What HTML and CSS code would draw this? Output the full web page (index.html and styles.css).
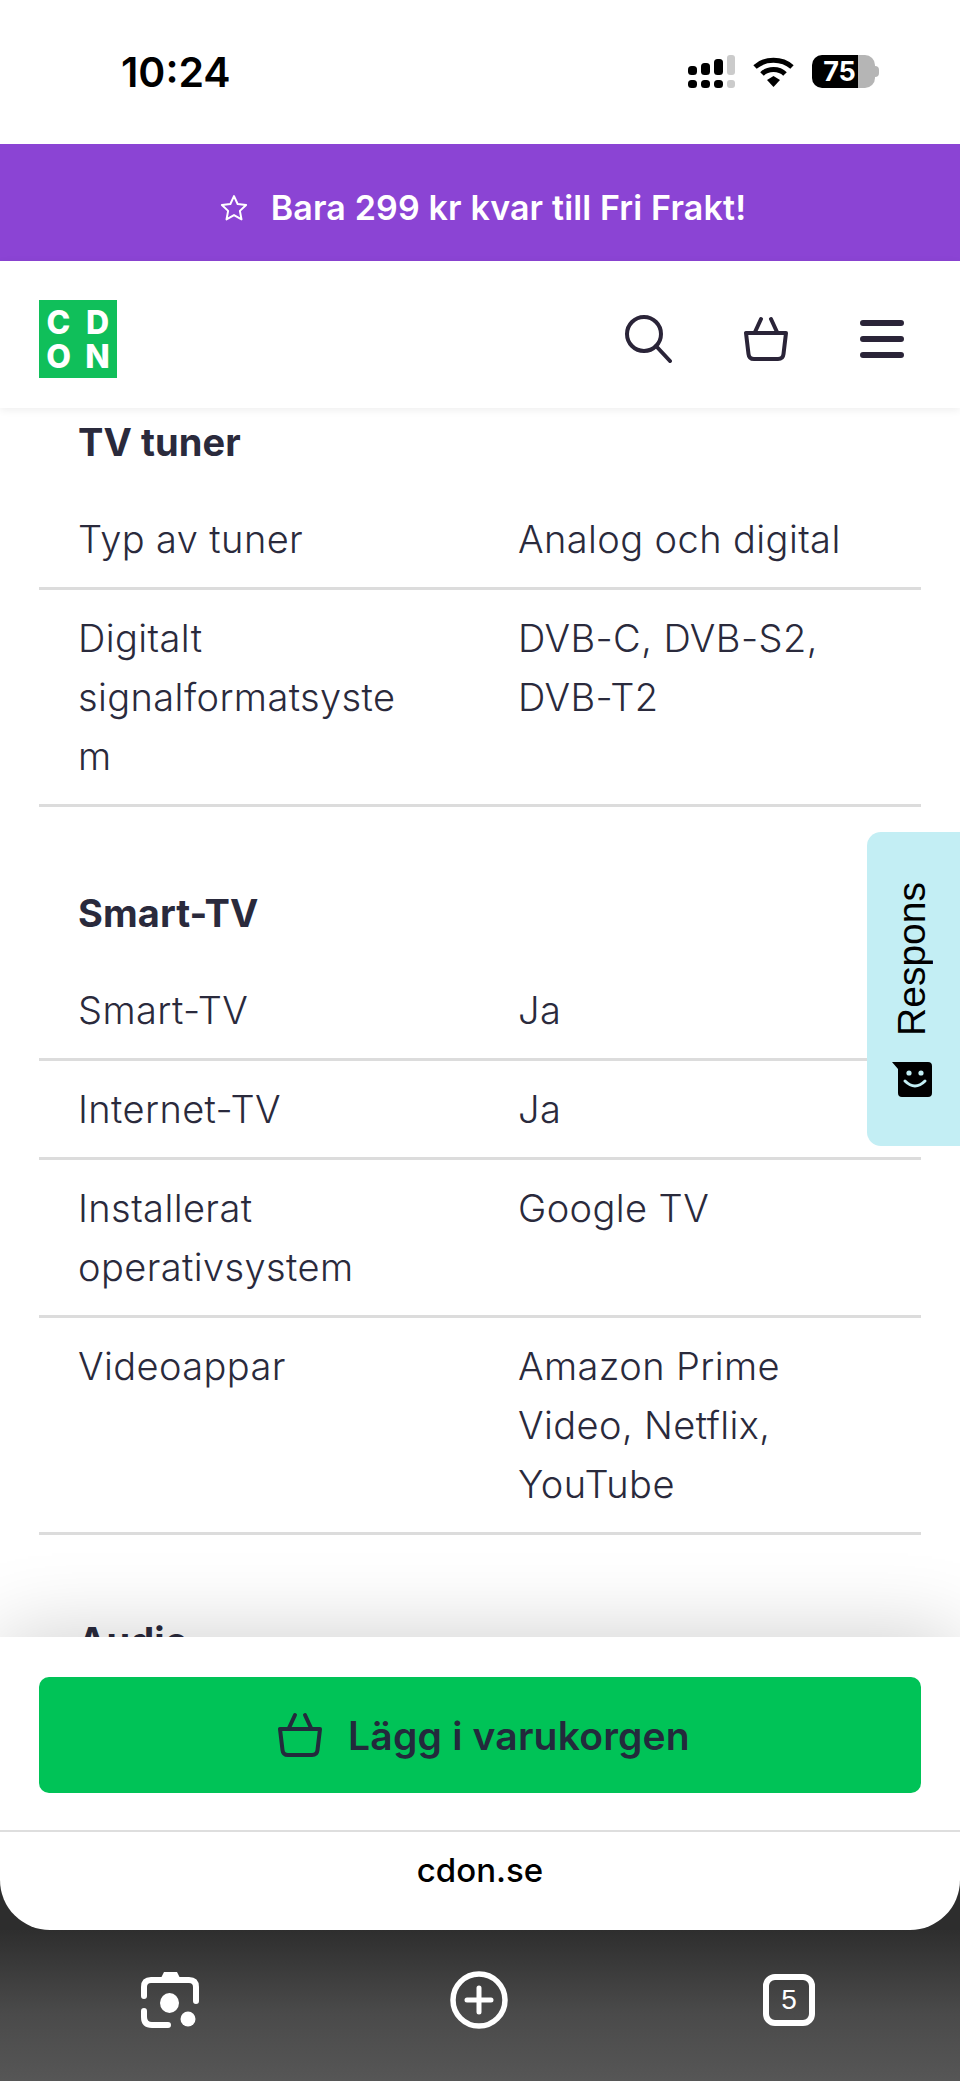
FILE: index.html
```html
<!DOCTYPE html>
<html lang="sv">
<head>
    <meta charset="UTF-8">
    <meta name="viewport" content="width=device-width, initial-scale=1.0">
    <title>CDON</title>
    <link rel="stylesheet" href="styles.css">
</head>
<body>
    <div class="status-bar">
        <span class="clock">10:24</span>
        <div class="status-icons">
            <svg width="47" height="33" viewBox="0 0 47 33">
                <rect x="0" y="11" width="9" height="9" rx="3.5"/>
                <rect x="13" y="8" width="9" height="12" rx="3.5"/>
                <rect x="26" y="4" width="9" height="16" rx="3.5"/>
                <rect x="39" y="0" width="8" height="20" rx="3" fill="#cbcbcb"/>
                <rect x="0" y="25" width="9" height="8" rx="3.5"/>
                <rect x="13" y="25" width="9" height="8" rx="3.5"/>
                <rect x="26" y="25" width="9" height="8" rx="3.5"/>
                <rect x="39" y="25" width="8" height="8" rx="3" fill="#cbcbcb"/>
            </svg>
            <svg class="wifi" width="41" height="31" viewBox="0 0 41 31">
                <path d="M2 11 C12 2 29 2 39 11" fill="none" stroke="#000" stroke-width="5"/>
                <path d="M9 18 C15 12 26 12 32 18" fill="none" stroke="#000" stroke-width="5"/>
                <path d="M14 24 L20.5 20 L27 24 L20.5 31 Z"/>
            </svg>
            <div class="battery">
                <span class="battery-level">75</span>
                <span class="battery-tip"></span>
            </div>
        </div>
    </div>

    <div class="promo">
        <svg width="30" height="30" viewBox="0 0 24 24">
            <path d="M12 2.5l2.9 6.3 6.8.8-5 4.7 1.3 6.8-6-3.4-6 3.4 1.3-6.8-5-4.7 6.8-.8z" fill="none" stroke="#fff" stroke-width="1.6" stroke-linejoin="round"/>
        </svg>
        <span>Bara 299 kr kvar till Fri Frakt!</span>
    </div>

    <header class="site-header">
        <div class="logo">
            <span>C</span><span>D</span><span>O</span><span>N</span>
        </div>
        <div class="header-icons">
            <svg width="48" height="48" viewBox="0 0 48 48" fill="none" stroke="#2a2438" stroke-width="4" stroke-linecap="round">
                <circle cx="20" cy="19" r="17"/>
                <path d="M32 31 L46 46"/>
            </svg>
            <svg width="44" height="46" viewBox="0 0 44 46" fill="none" stroke="#2a2438" stroke-width="4" stroke-linecap="round">
                <path d="M2 17 H42 L39.500 38 Q39 43 34 43 H10 Q5 43 4.500 38 Z" stroke-linejoin="round"/>
                <path d="M11 16 L17 3 M33 16 L27 3"/>
            </svg>
            <svg width="44" height="38" viewBox="0 0 44 38" fill="none" stroke="#2a2438" stroke-width="6" stroke-linecap="round">
                <path d="M3 3 H41 M3 19 H41 M3 35 H41"/>
            </svg>
        </div>
    </header>

    <main class="specs">
        <section class="spec-group">
            <h3>TV tuner</h3>
            <div class="spec-row"><div>Typ av tuner</div><div>Analog och digital</div></div>
            <div class="spec-row"><div>Digitalt signalformatsystem</div><div>DVB-C, DVB-S2, DVB-T2</div></div>
        </section>
        <section class="spec-group">
            <h3>Smart-TV</h3>
            <div class="spec-row"><div>Smart-TV</div><div>Ja</div></div>
            <div class="spec-row"><div>Internet-TV</div><div>Ja</div></div>
            <div class="spec-row"><div>Installerat operativsystem</div><div>Google TV</div></div>
            <div class="spec-row"><div>Videoappar</div><div>Amazon Prime Video, Netflix, YouTube</div></div>
        </section>
        <section class="spec-group">
            <h3>Audio</h3>
        </section>

        <div class="feedback-tab">
            <span>Respons</span>
            <svg width="40" height="35" viewBox="0 0 40 35">
                <path d="M0 0 H36 Q40 0 40 4 V31 Q40 35 36 35 H10 Q6 35 6 31 V7 Z"/>
                <circle cx="17" cy="11" r="2.600" fill="#c3eef4"/>
                <circle cx="29" cy="11" r="2.600" fill="#c3eef4"/>
                <path d="M13 19 Q23 29 33 19" fill="none" stroke="#c3eef4" stroke-width="3" stroke-linecap="round"/>
            </svg>
        </div>
    </main>

    <div class="browser-bottom">
        <div class="sheet">
            <div class="buy-area">
                <button class="buy-button">
                    <svg width="44" height="46" viewBox="0 0 44 46" fill="none" stroke="#232a3c" stroke-width="4" stroke-linecap="round">
                        <path d="M2 17 H42 L39.500 38 Q39 43 34 43 H10 Q5 43 4.500 38 Z" stroke-linejoin="round"/>
                        <path d="M11 16 L17 3 M33 16 L27 3"/>
                    </svg>
                    <span>Lägg i varukorgen</span>
                </button>
            </div>
            <div class="address">cdon.se</div>
        </div>
        <div class="toolbar">
            <svg width="58" height="58" viewBox="0 0 58 58" fill="none" stroke="#fff" stroke-width="6" stroke-linecap="round">
                <path d="M3 25 V16 Q3 9 10 9 H48 Q55 9 55 16 V30"/>
                <path d="M3 40 V46 Q3 54 11 54 H27"/>
                <path d="M19 9 L23 1 H36 L40 9 Z" fill="#fff" stroke="none"/>
                <ellipse cx="28.500" cy="32" rx="9.500" ry="10" fill="#fff" stroke="none"/>
                <circle cx="47" cy="48" r="7.500" fill="#fff" stroke="none"/>
            </svg>
            <svg class="new-tab" width="58" height="58" viewBox="0 0 58 58" fill="none" stroke="#fff" stroke-linecap="round">
                <circle cx="29" cy="29" r="26" stroke-width="5.500"/>
                <path d="M17 29 H41 M29 17 V41" stroke-width="5"/>
            </svg>
            <div class="tab-count">5</div>
        </div>
    </div>
</body>
</html>
```

FILE: styles.css
```css
* {
    box-sizing: border-box;
}
html, body {
    height: 100%;
}
body {
    margin: 0;
    display: flex;
    flex-direction: column;
    height: 2081px;
    overflow: hidden;
    background: #fff;
    color: #2a2a3c;
    font-family: "Inter", "Liberation Sans", sans-serif;
}

/* phone status bar */
.status-bar {
    height: 144px;
    flex: none;
    display: flex;
    justify-content: space-between;
    align-items: flex-start;
    padding: 49px 85px 0 121px;
}
.clock {
    font-size: 41px;
    line-height: 46px;
    font-weight: 600;
    color: #000;
}
.status-icons {
    display: flex;
    align-items: flex-start;
    gap: 18px;
    padding-top: 6px;
}
.wifi {
    margin-top: 1px;
}
.battery {
    position: relative;
    width: 63px;
    height: 33px;
    border-radius: 10px;
    background: linear-gradient(to right, #000 46px, #b5b5b5 46px);
    color: #fff;
    font-size: 27px;
    font-weight: 700;
    line-height: 33px;
    text-align: center;
    padding-right: 8px;
}
.battery-tip {
    position: absolute;
    right: -4px;
    top: 11px;
    width: 4px;
    height: 11px;
    border-radius: 0 4px 4px 0;
    background: #b5b5b5;
}

.promo {
    height: 117px;
    flex: none;
    background: #8b44d4;
    color: #fff;
    display: flex;
    align-items: center;
    justify-content: center;
    gap: 22px;
    padding: 10px 0 0 5px;
    font-size: 34px;
    font-weight: 600;
    letter-spacing: 0.15px;
}

.site-header {
    height: 147px;
    flex: none;
    display: flex;
    justify-content: space-between;
    align-items: center;
    padding: 8px 56px 0 39px;
    background: #fff;
    box-shadow: 0 2px 8px rgba(0, 0, 0, 0.07);
    position: relative;
    z-index: 2;
}
.logo {
    width: 78px;
    height: 78px;
    background: #10bf5a;
    color: #fff;
    display: grid;
    grid-template-columns: 1fr 1fr;
    grid-auto-rows: 34px;
    place-items: center;
    padding: 6px 0 4px;
    font-size: 32px;
    font-weight: 800;
    line-height: 34px;
}
.header-icons {
    display: flex;
    align-items: center;
    gap: 72px;
}

/* product specification table */
.specs {
    flex: 1;
    min-height: 0;
    overflow: hidden;
    position: relative;
    padding: 5px 39px 0;
    font-size: 38px;
    font-weight: 350;
    letter-spacing: 0.4px;
    line-height: 59px;
}
.spec-group {
    margin-bottom: 77px;
}
.spec-group h3 {
    margin: 0;
    padding: 0 0 19px 39px;
    font-size: 38px;
    line-height: 59px;
    font-weight: 700;
    letter-spacing: 0.1px;
}
.spec-row {
    display: grid;
    grid-template-columns: 440px 1fr;
    padding: 19px 0 18px;
    border-bottom: 3px solid #dcdcdc;
}
.spec-row > div {
    padding: 0 39px;
    overflow-wrap: anywhere;
}
.spec-row > div:first-child {
    padding-right: 62px;
}
.feedback-tab {
    position: absolute;
    right: 0;
    top: 424px;
    width: 93px;
    height: 314px;
    border-radius: 14px 0 0 14px;
    background: #c3eef4;
    color: #000;
    display: flex;
    flex-direction: column;
    align-items: center;
    padding: 50px 4px 0 0;
    gap: 26px;
    font-weight: 400;
    letter-spacing: 0;
}
.feedback-tab span {
    writing-mode: vertical-rl;
    transform: rotate(180deg);
    font-family: "Liberation Sans", Arial, sans-serif;
    font-size: 39px;
    line-height: 44px;
}

/* browser chrome at the bottom */
.browser-bottom {
    flex: none;
    height: 444px;
    position: relative;
    z-index: 3;
    background: #2d2d2d;
    box-shadow: 0 0 80px rgba(0, 0, 0, 0.2);
}
.sheet {
    height: 293px;
    background: #fff;
    border-radius: 0 0 50px 50px;
}
.buy-area {
    height: 195px;
    padding: 40px 39px 0;
    border-bottom: 2px solid #dedede;
}
.buy-button {
    width: 100%;
    height: 116px;
    border: 0;
    border-radius: 10px;
    background: #00c357;
    color: #232a3c;
    display: flex;
    align-items: center;
    justify-content: center;
    gap: 26px;
    padding: 0 0 0 8px;
    font-family: inherit;
    font-size: 39px;
    font-weight: 600;
    letter-spacing: 0.2px;
}
.address {
    text-align: center;
    color: #000;
    font-size: 33px;
    font-weight: 500;
    line-height: 40px;
    padding-top: 18px;
}
.toolbar {
    height: 151px;
    display: flex;
    justify-content: space-between;
    align-items: center;
    padding: 0 145px 12px 141px;
    background: linear-gradient(to bottom, #2e2e2e, #4a4a4a 55%, #565656);
}
.new-tab {
    margin-right: 4px;
}
.tab-count {
    width: 52px;
    height: 52px;
    border: 6px solid #fff;
    border-radius: 12px;
    color: #fff;
    font-family: "Liberation Sans", Arial, sans-serif;
    font-size: 28px;
    font-weight: 400;
    line-height: 40px;
    text-align: center;
}
```
